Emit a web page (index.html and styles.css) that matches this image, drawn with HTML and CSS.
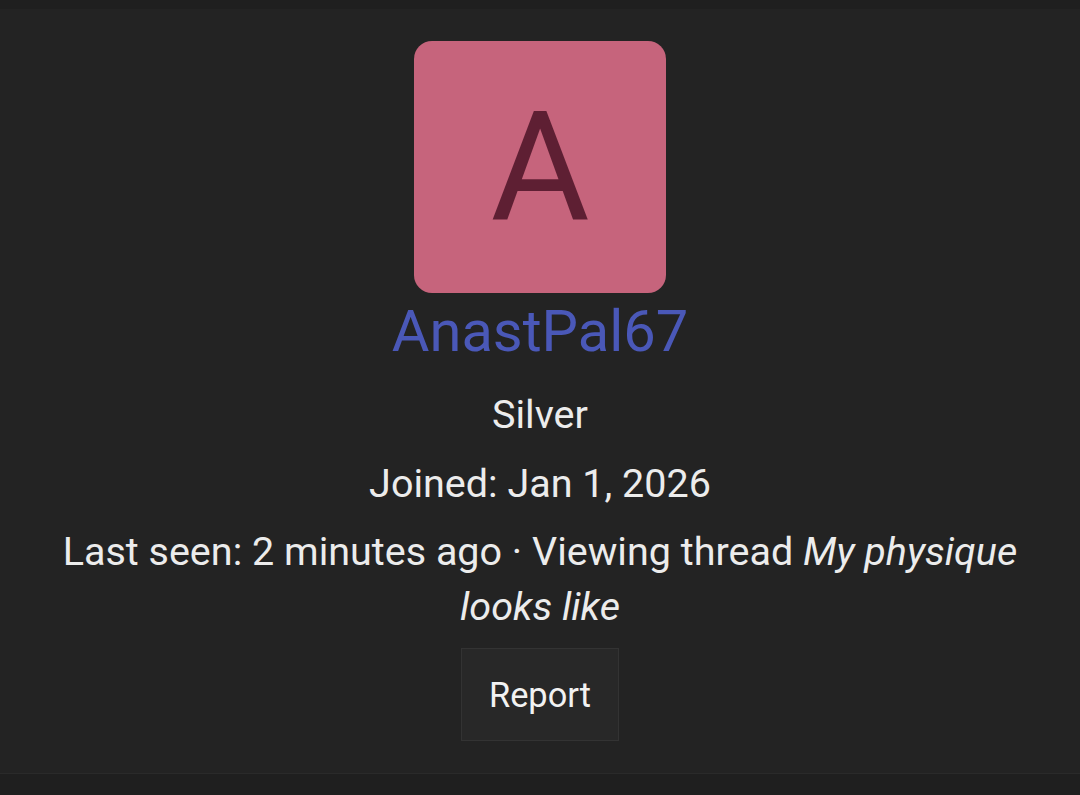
FILE: index.html
```html
<!DOCTYPE html>
<html lang="en">
<head>
<meta charset="utf-8">
<title>AnastPal67</title>
<link rel="stylesheet" href="styles.css">
</head>
<body>
<div class="page">
  <section class="profile">
    <div class="avatar"><span class="avatar-letter">A</span></div>
    <a class="username" href="#">AnastPal67</a>
    <div class="meta rank">Silver</div>
    <div class="meta joined">Joined: Jan 1, 2026</div>
    <div class="meta seen">Last seen: 2 minutes ago · Viewing thread <em>My physique looks like</em></div>
    <button class="report" type="button">Report</button>
  </section>
</div>
</body>
</html>
```

FILE: styles.css
```css
* { box-sizing: border-box; }
html, body { margin: 0; padding: 0; }
body {
  background: #1f1f1f;
  font-family: Roboto, "Noto Sans", sans-serif;
  color: #ececec;
  width: 1080px;
  height: 795px;
  overflow: hidden;
}
.page {
  padding-top: 9px;
}
.profile {
  background: #232323;
  border-bottom: 1px solid #2a2a2a;
  height: 765px;
  display: flex;
  flex-direction: column;
  align-items: center;
  padding: 32px 40px 0;
}
.avatar {
  width: 252px;
  height: 252px;
  border-radius: 18px;
  background: #c6647c;
  display: flex;
  align-items: center;
  justify-content: center;
}
.avatar-letter {
  font-size: 152px;
  line-height: 1;
  color: #5e1f33;
}
.username {
  color: #4a58b8;
  text-decoration: none;
  font-size: 57.8px;
  line-height: 76px;
}
.meta {
  font-size: 39.5px;
  line-height: 55px;
  text-align: center;
}
.rank { margin-top: 18px; }
.joined { margin-top: 14px; }
.seen { margin-top: 13px; }
.seen em { font-style: italic; }
.report {
  margin-top: 14px;
  width: 158px;
  height: 93px;
  background: #282828;
  border: 1px solid #333333;
  color: #f2f2f2;
  font-family: Roboto, sans-serif;
  font-size: 34.4px;
  padding: 0;
  cursor: pointer;
}
```
